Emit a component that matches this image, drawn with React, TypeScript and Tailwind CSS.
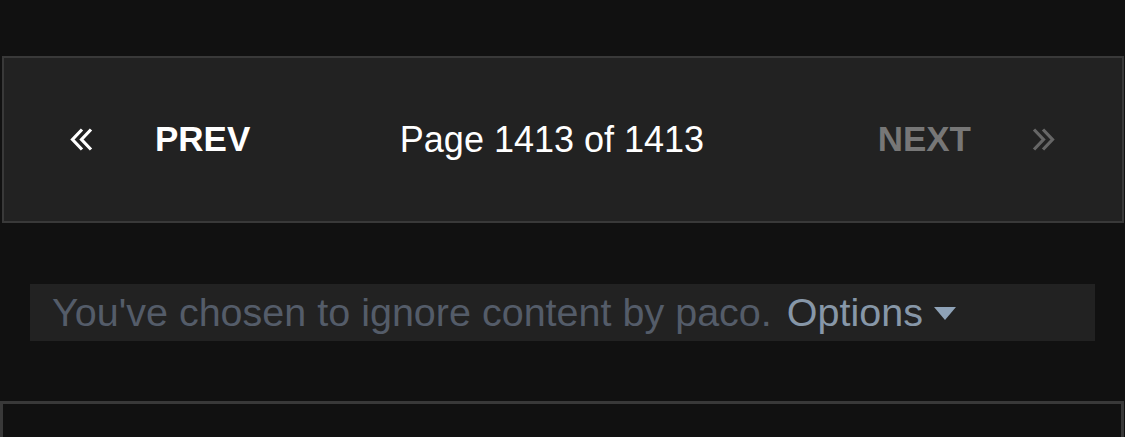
import React from 'react';

const font = { fontFamily: '"Liberation Sans", Arial, Helvetica, sans-serif' };

const Chevrons = ({ dir, className }: { dir: 'left' | 'right'; className?: string }) => (
  <svg width="23" height="23" viewBox="0 0 23 23" fill="none" className={`shrink-0 ${className ?? ''}`}>
    {dir === 'left' ? (
      <>
        <path d="M12 1.5 L2.5 11.5 L12 21.5" stroke="currentColor" strokeWidth="3.2" />
        <path d="M21 1.5 L11.5 11.5 L21 21.5" stroke="currentColor" strokeWidth="3.2" />
      </>
    ) : (
      <>
        <path d="M2 1.5 L11.5 11.5 L2 21.5" stroke="currentColor" strokeWidth="3.2" />
        <path d="M11 1.5 L20.5 11.5 L11 21.5" stroke="currentColor" strokeWidth="3.2" />
      </>
    )}
  </svg>
);

export default function App() {
  return (
    <div className="w-[1125px] h-[437px] overflow-hidden bg-[#111111] pt-[56px]" style={font}>
      {/* Pager */}
      <div className="ml-[2px] mr-[1px] h-[167px] border-2 border-[#393939] bg-[#222222] flex items-center text-[36px]">
        <div className="w-[66px] shrink-0" />
        <Chevrons dir="left" className="text-white" />
        <div className="w-[62px] shrink-0" />
        <span className="font-bold text-white text-[35px]">PREV</span>
        <span className="flex-1 text-center text-white pr-[24px]">Page 1413 of 1413</span>
        <span className="font-bold text-[#777777] text-[35px]">NEXT</span>
        <div className="w-[61px] shrink-0" />
        <Chevrons dir="right" className="text-[#666666]" />
        <div className="w-[67px] shrink-0" />
      </div>

      {/* Ignored notice */}
      <div className="mt-[61px] ml-[30px] w-[1065px] h-[57px] bg-[#222222] flex items-center pl-[22px] text-[39.5px] whitespace-nowrap">
        <span className="text-[#545c69]">You've chosen to ignore content by paco.</span>
        <span className="ml-[15px] text-[#8797a8]">Options</span>
        <svg width="22" height="13" viewBox="0 0 22 13" className="ml-[11px] mt-[1px] shrink-0">
          <path d="M0 0 H22 L11 13 Z" fill="#8fa3b8" />
        </svg>
      </div>

      {/* Next post box */}
      <div className="mt-[60px] mr-[1px] h-[80px] border-[3px] border-[#393939] bg-[#111111]" />
    </div>
  );
}
